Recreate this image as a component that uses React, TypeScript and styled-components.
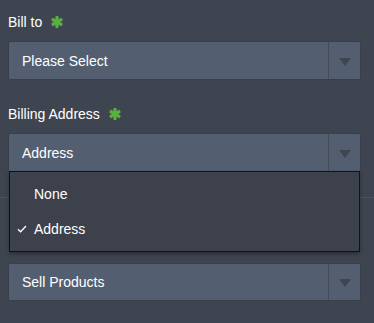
import React from 'react';
import styled, { createGlobalStyle } from 'styled-components';

const GlobalStyle = createGlobalStyle`
	body {
		margin: 0;
		background: #3f4550;
		font-family: "Liberation Sans", Arial, sans-serif;
		color: #fff;
	}
`;

const Page = styled.div`
	padding: 0 13px 0 8px;
`;

const Section = styled.div<{ $top: number; $bottom: number; $line?: boolean }>`
	padding-top: ${(p) => p.$top}px;
	padding-bottom: ${(p) => p.$bottom}px;
	margin: 0 -13px 0 -8px;
	padding-left: 8px;
	padding-right: 13px;
	border-bottom: ${(p) => (p.$line ? '1px solid #4d535e' : 'none')};
`;

const Label = styled.div`
	display: flex;
	align-items: center;
	gap: 9px;
	height: 20px;
	font-size: 14px;
	margin-bottom: 9px;
`;

const Select = styled.div<{ $h: number }>`
	position: relative;
	display: flex;
	height: ${(p) => p.$h}px;
	box-sizing: border-box;
	background: #535f70;
	border: 1px solid #3a4049;
	border-radius: 2px;
	font-size: 14px;
`;

const Value = styled.div`
	flex: 1;
	display: flex;
	align-items: center;
	padding-left: 13px;
`;

const ArrowZone = styled.div`
	width: 31px;
	display: flex;
	align-items: center;
	justify-content: center;
	border-left: 1px solid #454c58;
	padding-top: 2px;
`;

const Triangle = styled.span`
	width: 0;
	height: 0;
	border-left: 6px solid transparent;
	border-right: 6px solid transparent;
	border-top: 8px solid #3f4551;
`;

const Menu = styled.ul`
	position: absolute;
	top: 100%;
	left: 0;
	right: 0;
	z-index: 5;
	margin: 0;
	padding: 4px 0 5px;
	list-style: none;
	background: #3c414b;
	border: 1px solid #101215;
	box-shadow: 0 2px 4px rgba(0, 0, 0, 0.35);
`;

const Item = styled.li`
	position: relative;
	height: 35px;
	display: flex;
	align-items: center;
	padding-left: 24px;
	font-size: 14px;
`;

const Check = styled.span`
	position: absolute;
	left: 7px;
	top: 50%;
	transform: translateY(-50%);
	display: flex;
`;

function Required() {
	return (
		<svg width="12" height="12" viewBox="0 0 12 12">
			<g fill="#5ab040">
				<rect x="4.4" y="0" width="3.2" height="12" rx="0.8" />
				<rect x="4.4" y="0" width="3.2" height="12" rx="0.8" transform="rotate(60 6 6)" />
				<rect x="4.4" y="0" width="3.2" height="12" rx="0.8" transform="rotate(-60 6 6)" />
			</g>
		</svg>
	);
}

type FieldProps = { label?: string; value: string; open?: boolean; h?: number };

function Field({ label, value, open, h = 39 }: FieldProps) {
	return (
		<>
			{label && (
				<Label>
					{label}
					<Required />
				</Label>
			)}
			<Select $h={h}>
				<Value>{value}</Value>
				<ArrowZone>
					<Triangle />
				</ArrowZone>
				{open && (
					<Menu>
						<Item>None</Item>
						<Item>
							<Check>
								<svg width="10" height="8" viewBox="0 0 10 8">
									<path d="M1 4.2 L3.6 6.8 L9 1" fill="none" stroke="#fff" strokeWidth="1.3" />
								</svg>
							</Check>
							Address
						</Item>
					</Menu>
				)}
			</Select>
		</>
	);
}

function App() {
	return (
		<>
			<GlobalStyle />
			<Page>
				<Section $top={12} $bottom={0}>
					<Field label="Bill to" value="Please Select" />
				</Section>
				<Section $top={24} $bottom={25} $line>
					<Field label="Billing Address" value="Address" open />
				</Section>
				<Section $top={65} $bottom={20}>
					<Field value="Sell Products" h={38} />
				</Section>
			</Page>
		</>
	);
}

export default App;
